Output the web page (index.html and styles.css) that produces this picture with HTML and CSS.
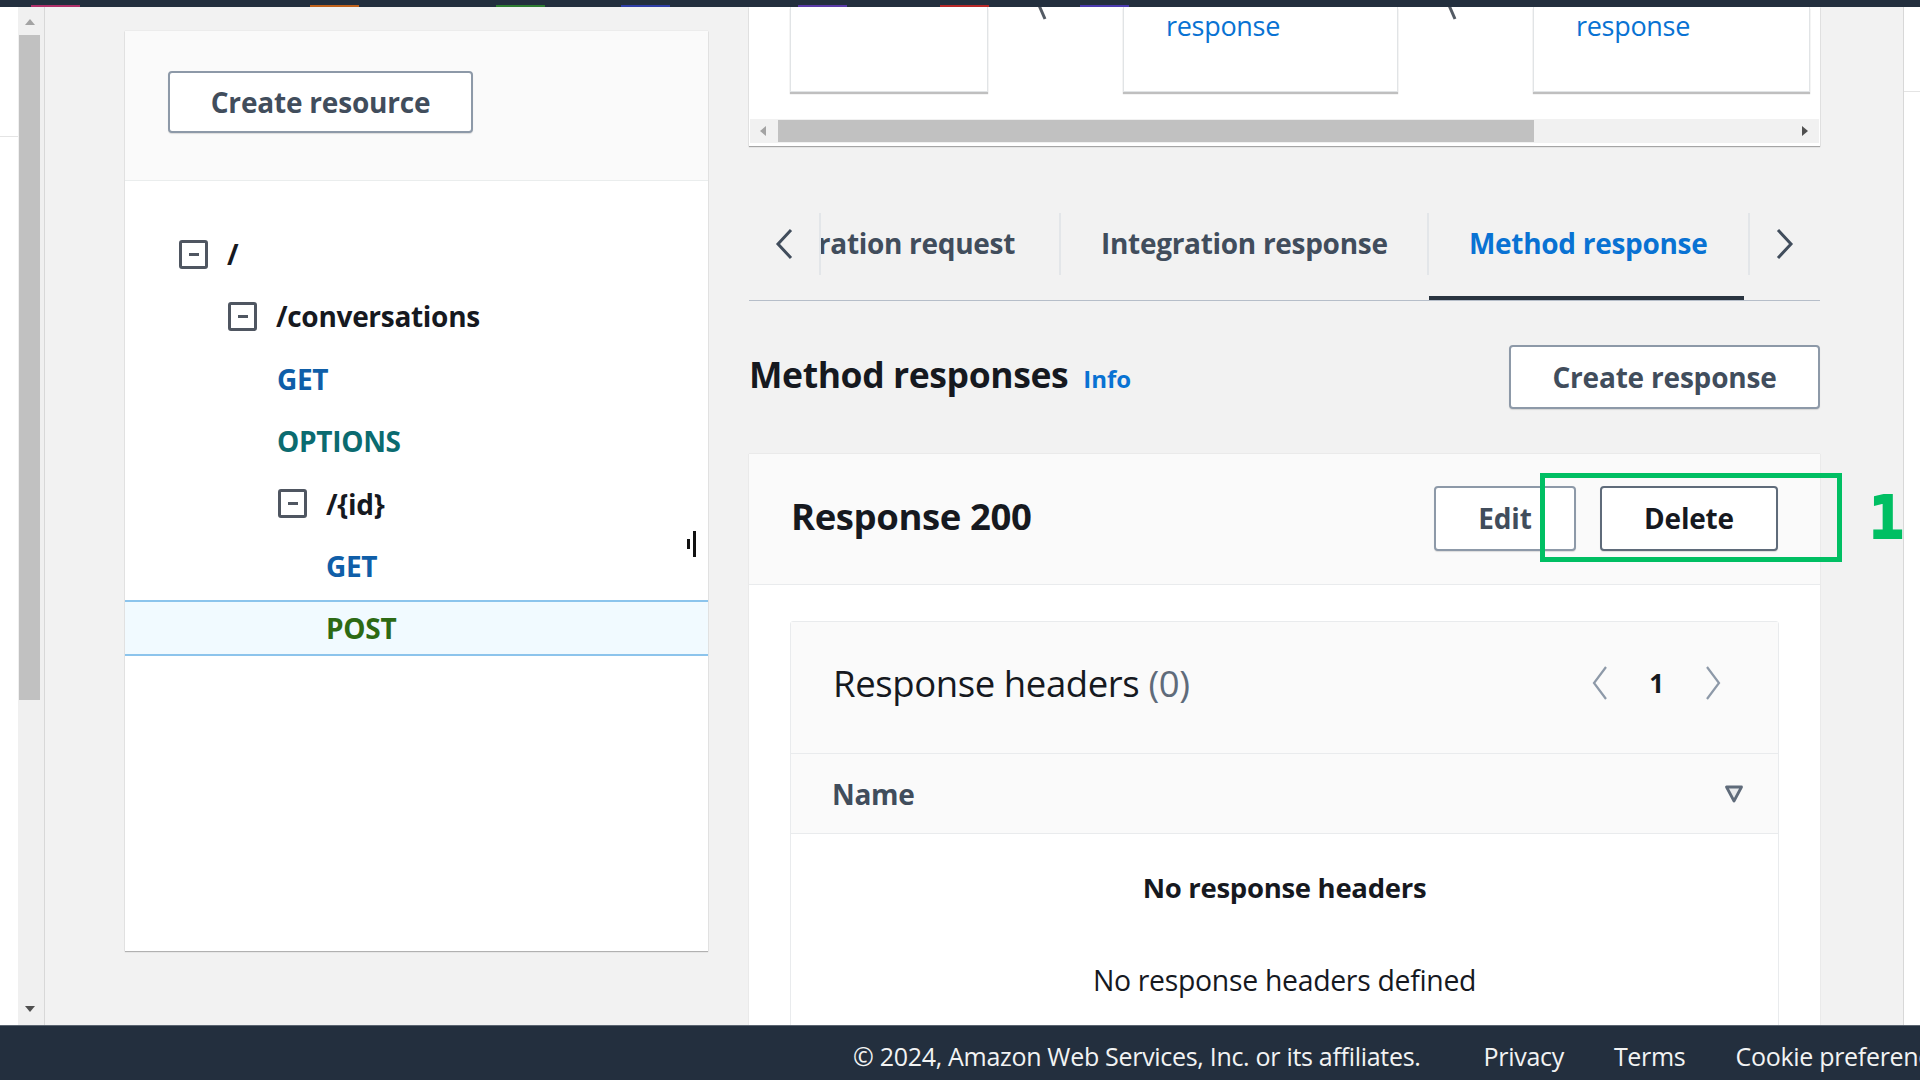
FILE: index.html
```html
<!DOCTYPE html>
<html lang="en">
<head>
<meta charset="utf-8">
<title>API Gateway - Method response</title>
<link rel="stylesheet" href="styles.css">
</head>
<body>
<div class="page">
  <div class="topbar">
    <span class="mark mk1"></span><span class="mark mk2"></span><span class="mark mk3"></span><span class="mark mk4"></span><span class="mark mk5"></span><span class="mark mk6"></span><span class="mark mk7"></span>
  </div>
  <div class="main">
    <div class="leftrail">
      <div class="edge"><div class="edge-top"></div></div>
      <div class="vscroll">
        <div class="vs-arrow vs-up"></div>
        <div class="vs-thumb"></div>
        <div class="vs-track"></div>
        <div class="vs-arrow vs-down"></div>
      </div>
    </div>
    <div class="workspace">
      <aside class="resources">
        <div class="res-head">
          <button class="btn btn-create-res">Create resource</button>
        </div>
        <div class="tree">
          <div class="row lvl0"><span class="toggle"></span><span class="path">/</span></div>
          <div class="row lvl1"><span class="toggle"></span><span class="path">/conversations</span></div>
          <div class="row m1"><span class="method get">GET</span></div>
          <div class="row m1"><span class="method options">OPTIONS</span></div>
          <div class="row lvl2"><span class="toggle"></span><span class="path">/{id}</span></div>
          <div class="row m2"><span class="method get">GET</span></div>
          <div class="row m2 selected"><span class="method post">POST</span></div>
        </div>
        <div class="cursor"><span class="c-short"></span><span class="c-tall"></span></div>
      </aside>
      <section class="detail">
        <div class="flowcard">
          <div class="flow">
            <div class="fbox fb1"></div>
            <div class="fgap"><svg width="135" height="30" viewBox="0 0 135 30"><line x1="50" y1="-4" x2="57" y2="12" stroke="#545b64" stroke-width="3"/></svg></div>
            <div class="fbox fb2"><span class="flink">response</span></div>
            <div class="fgap"><svg width="135" height="30" viewBox="0 0 135 30"><line x1="50" y1="-4" x2="57" y2="12" stroke="#545b64" stroke-width="3"/></svg></div>
            <div class="fbox fb3"><span class="flink">response</span></div>
          </div>
          <div class="hscroll">
            <span class="hs-arrow hs-left"></span>
            <span class="hs-thumb"></span>
            <span class="hs-rest"></span>
            <span class="hs-arrow hs-right"></span>
          </div>
        </div>

        <div class="tabs">
          <div class="tab-chev"><svg width="22" height="32" viewBox="0 0 22 32"><polyline points="18,2 5,16 18,30" fill="none" stroke="#414d5c" stroke-width="3"/></svg></div>
          <span class="sep"></span>
          <div class="tab-view">
            <div class="tab tab1"><span>Integration request</span></div>
            <span class="sep"></span>
            <div class="tab tab2"><span>Integration response</span></div>
            <span class="sep"></span>
            <div class="tab tab3 active"><span>Method response</span></div>
          </div>
          <span class="sep"></span>
          <div class="tab-chev"><svg width="22" height="32" viewBox="0 0 22 32"><polyline points="4,2 17,16 4,30" fill="none" stroke="#414d5c" stroke-width="3"/></svg></div>
        </div>

        <div class="heading-row">
          <h2 class="h2">Method responses <a class="info">Info</a></h2>
          <button class="btn btn-create-resp">Create response</button>
        </div>

        <div class="rcard">
          <div class="rcard-head">
            <h3 class="h3">Response 200</h3>
            <div class="actions">
              <button class="btn btn-edit">Edit</button>
              <button class="btn btn-delete">Delete</button>
            </div>
          </div>
          <div class="rcard-body">
            <div class="table">
              <div class="table-head">
                <div class="th-title">Response headers <span class="count">(0)</span></div>
                <div class="pager">
                  <svg width="18" height="38" viewBox="0 0 18 38"><polyline points="15,3 3,19 15,35" fill="none" stroke="#8d99a8" stroke-width="2.2"/></svg>
                  <span class="page-num">1</span>
                  <svg width="18" height="38" viewBox="0 0 18 38"><polyline points="3,3 15,19 3,35" fill="none" stroke="#8d99a8" stroke-width="2.2"/></svg>
                </div>
              </div>
              <div class="col-head">
                <span class="col-name">Name</span>
                <svg class="sort" width="20" height="20" viewBox="0 0 20 20"><polygon points="2.5,3 17.5,3 10,17" fill="#e9ebed" stroke="#5f6b7a" stroke-width="2.8" stroke-linejoin="round"/></svg>
              </div>
              <div class="empty">
                <div class="empty-title">No response headers</div>
                <div class="empty-text">No response headers defined</div>
              </div>
            </div>
          </div>
          <div class="annot-box"></div>
          <div class="annot-num">1</div>
        </div>
      </section>
    </div>
    <div class="rightgap"></div>
    <div class="rightpane"><div class="rp-top"></div></div>
  </div>
  <footer class="footer">
    <span class="copy">© 2024, Amazon Web Services, Inc. or its affiliates.</span>
    <span class="flink2 privacy">Privacy</span>
    <span class="flink2">Terms</span>
    <span class="flink2">Cookie preferences</span>
  </footer>
</div>
</body>
</html>
```

FILE: styles.css
```css
* { box-sizing: border-box; }
html, body { margin: 0; padding: 0; }
body {
  width: 1920px;
  height: 1080px;
  overflow: hidden;
  font-family: "Open Sans", "Noto Sans", sans-serif;
  color: #16191f;
  background: #f2f2f2;
}
.page { display: flex; flex-direction: column; height: 1080px; }

/* top bar */
.topbar {
  height: 7px;
  background: #232f3e;
  display: flex;
  align-items: flex-end;
  flex: none;
}
.mark { height: 2px; width: 49px; display: block; }
.mk1 { background: #b0306a; margin-left: 31px; }
.mk2 { background: #c0621c; margin-left: 230px; }
.mk3 { background: #2e7d32; margin-left: 137px; }
.mk4 { background: #2f3ea8; margin-left: 76px; }
.mk5 { background: #5a3aa8; margin-left: 128px; }
.mk6 { background: #b82828; margin-left: 93px; }
.mk7 { background: #4b3ab0; margin-left: 91px; }

/* main */
.main { flex: 1; display: flex; overflow: hidden; min-height: 0; }

.leftrail {
  width: 45px;
  flex: none;
  display: flex;
  border-right: 1px solid #d8d8d8;
  background: #f0f0f0;
}
.edge { width: 18px; background: #fff; }
.edge-top { height: 130px; border-bottom: 1px solid #e4e4e4; }
.vscroll {
  width: 23px;
  background: #f0f0f0;
  display: flex;
  flex-direction: column;
  align-items: center;
}
.vs-arrow { width: 0; height: 0; border-left: 5px solid transparent; border-right: 5px solid transparent; }
.vs-up { border-bottom: 6px solid #a3a3a3; margin-top: 12px; }
.vs-down { border-top: 6px solid #505050; margin-bottom: 13px; }
.vs-thumb { width: 21px; height: 665px; background: #c1c1c1; margin-top: 10px; }
.vs-track { flex: 1; }

.workspace {
  display: flex;
  align-items: flex-start;
  padding-left: 80px;
  gap: 41px;
  flex: none;
}

/* resources card */
.resources {
  position: relative;
  width: 583px;
  height: 920px;
  margin-top: 24px;
  background: #fff;
  box-shadow: 0 1px 1px rgba(0,0,0,0.25), 0 0 1px rgba(0,0,0,0.15);
  flex: none;
}
.res-head {
  height: 150px;
  background: #fafafa;
  border-bottom: 1px solid #eaeded;
  padding: 40px 0 0 43px;
}
.btn {
  font-family: "Open Sans", "Noto Sans", sans-serif;
  font-weight: 700;
  font-size: 28px;
  color: #414d5c;
  background: #fff;
  border: 2px solid #8d99a8;
  border-radius: 4px;
  display: flex;
  align-items: center;
  justify-content: center;
  padding: 0;
  letter-spacing: -0.2px;
  box-shadow: 0 1px 1px rgba(0,0,0,0.12);
}
.btn-create-res { width: 305px; height: 62px; }

.tree {
  padding-top: 45px;
  display: flex;
  flex-direction: column;
  gap: 6.4px;
}
.row {
  height: 56px;
  display: flex;
  align-items: center;
  font-size: 28px;
  font-weight: 700;
  letter-spacing: -0.3px;
}
.lvl0 { padding-left: 54px; }
.lvl1 { padding-left: 103px; }
.lvl2 { padding-left: 153px; }
.m1 { padding-left: 152px; }
.m2 { padding-left: 201px; }
.toggle {
  width: 29px;
  height: 29px;
  border: 3.5px solid #4f5661;
  border-radius: 3px;
  display: flex;
  align-items: center;
  justify-content: center;
  margin-right: 19px;
  flex: none;
}
.toggle::before { content: ""; width: 10px; height: 3px; background: #4f5661; }
.path { color: #16191f; }
.method.get { color: #0f5ea8; }
.method.options { color: #0b6b70; }
.method.post { color: #2d6a14; }
.selected {
  background: #f1faff;
  border-top: 2px solid #8cc4ec;
  border-bottom: 2px solid #8cc4ec;
}
.cursor {
  position: absolute;
  left: 562px;
  top: 500px;
  display: flex;
  align-items: center;
  gap: 3px;
}
.c-short { width: 3px; height: 10px; background: #111; }
.c-tall { width: 3px; height: 26px; background: #111; }

/* detail column */
.detail { width: 1071px; flex: none; display: flex; flex-direction: column; }

.flowcard {
  height: 139px;
  background: #fff;
  box-shadow: 0 1px 1px rgba(0,0,0,0.3), 0 0 1px rgba(0,0,0,0.15);
  display: flex;
  flex-direction: column;
}
.flow {
  height: 112px;
  display: flex;
  align-items: flex-start;
  padding-left: 41px;
}
.fbox {
  height: 85px;
  background: #fff;
  border: 1px solid #e1e4e6;
  border-top: none;
  box-shadow: 0 2px 1px rgba(0,0,0,0.25);
  flex: none;
}
.fb1 { width: 198px; }
.fb2 { width: 275px; padding-left: 42px; }
.fb3 { width: 277px; padding-left: 42px; }
.fgap { width: 135px; height: 30px; flex: none; }
.flink {
  display: block;
  color: #0972d3;
  font-size: 27px;
  line-height: 38px;
  margin-top: 0;
  letter-spacing: -0.3px;
}
.hscroll {
  height: 24px;
  background: #f1f1f1;
  display: flex;
  align-items: center;
  margin: 0 1px;
}
.hs-arrow { width: 0; height: 0; border-top: 5px solid transparent; border-bottom: 5px solid transparent; flex: none; }
.hs-left { border-right: 6px solid #a3a3a3; margin-left: 10px; }
.hs-right { border-left: 6px solid #505050; margin-right: 11px; }
.hs-thumb { width: 756px; height: 22px; background: #c1c1c1; margin-left: 12px; }
.hs-rest { flex: 1; }

/* tabs */
.tabs {
  margin-top: 63px;
  height: 92px;
  border-bottom: 1px solid #b6bec9;
  display: flex;
  align-items: flex-start;
}
.tab-chev {
  width: 70px;
  height: 62px;
  margin-top: 4px;
  display: flex;
  align-items: center;
  justify-content: center;
  flex: none;
}
.sep { width: 2px; height: 62px; margin-top: 4px; background: #e3e6e9; flex: none; }
.tab-view { flex: 1; display: flex; overflow: hidden; align-items: flex-start; height: 91px; }
.tab {
  height: 91px;
  display: flex;
  align-items: flex-start;
  padding-top: 15px;
  font-size: 28px;
  line-height: 38px;
  font-weight: 700;
  color: #414d5c;
  white-space: nowrap;
  overflow: hidden;
  flex: none;
  letter-spacing: -0.3px;
}
.tab1 { width: 238px; justify-content: flex-end; padding-right: 44px; }
.tab2 { width: 366px; padding-left: 40px; }
.tab3 { width: 315px; padding-left: 40px; }
.tab.active { color: #0972d3; box-shadow: inset 0 -4px 0 #2a3440; }

/* heading row */
.heading-row {
  margin-top: 44px;
  height: 64px;
  display: flex;
  align-items: center;
  justify-content: space-between;
}
.h2 { margin: 0 0 7px; font-size: 35.5px; font-weight: 700; letter-spacing: -0.4px; display: flex; align-items: baseline; }
.info { color: #0972d3; font-size: 24px; font-weight: 700; margin-left: 15px; letter-spacing: 0; }
.btn-create-resp { width: 311px; height: 64px; }

/* response card */
.rcard {
  position: relative;
  margin-top: 45px;
  background: #fff;
  box-shadow: 0 0 1px rgba(0,0,0,0.2);
  height: 700px;
}
.rcard-head {
  height: 131px;
  background: #fafafa;
  border-bottom: 1px solid #e9ebed;
  display: flex;
  align-items: center;
  justify-content: space-between;
  padding: 0 42px;
}
.h3 { margin: 0 0 7px; font-size: 36.5px; font-weight: 700; letter-spacing: -0.4px; }
.actions { display: flex; gap: 24px; margin-top: -2px; }
.btn-edit { width: 142px; height: 65px; }
.btn-delete { width: 178px; height: 65px; color: #16191f; border-color: #5f6b7a; }

.rcard-body { padding: 36px 41px 0; }
.table {
  border: 1px solid #e9ebed;
  border-radius: 3px;
  background: #fff;
}
.table-head {
  height: 131px;
  background: #fafafa;
  display: flex;
  align-items: flex-start;
  justify-content: space-between;
  padding: 38px 56px 0 42px;
}
.th-title { font-size: 36.5px; line-height: 46px; letter-spacing: -0.4px; color: #16191f; }
.count { color: #5f6b7a; }
.pager { display: flex; align-items: center; gap: 40px; height: 46px; }
.page-num { font-size: 26px; font-weight: 700; color: #16191f; }
.col-head {
  height: 81px;
  background: #fafafa;
  border-top: 1px solid #e9ebed;
  border-bottom: 1px solid #e9ebed;
  display: flex;
  align-items: center;
  justify-content: space-between;
  padding: 0 34px 0 41px;
}
.col-name { font-size: 28px; font-weight: 700; color: #414d5c; letter-spacing: -0.3px; }
.empty { text-align: center; padding-top: 34px; height: 400px; }
.empty-title { font-size: 27.5px; font-weight: 700; line-height: 40px; letter-spacing: -0.3px; }
.empty-text { font-size: 28.4px; line-height: 40px; margin-top: 52px; letter-spacing: -0.3px; }

.annot-box {
  position: absolute;
  left: 791px;
  top: 19px;
  width: 302px;
  height: 89px;
  border: 5px solid #00bf63;
}
.annot-num {
  position: absolute;
  left: 1120px;
  top: 34px;
  font-family: "DejaVu Sans Mono", monospace;
  font-weight: 700;
  font-size: 58px;
  line-height: 60px;
  color: #00bf63;
  -webkit-text-stroke: 2px #00bf63;
}

.rightgap { width: 84px; flex: none; border-right: 1px solid #d8d8d8; }
.rightpane { flex: 1; background: #fff; }
.rp-top { height: 85px; border-bottom: 1px solid #e4e4e4; }

/* footer */
.footer {
  height: 55px;
  flex: none;
  background: #232f3e;
  border-top: 1px solid #5a6470;
  display: flex;
  align-items: center;
  padding: 6px 0 0 853px;
  color: #f2f3f3;
  font-size: 25px;
  white-space: nowrap;
  overflow: hidden;
  letter-spacing: -0.3px;
}
.flink2 { margin-left: 50px; }
.privacy { margin-left: 63px; }
```
